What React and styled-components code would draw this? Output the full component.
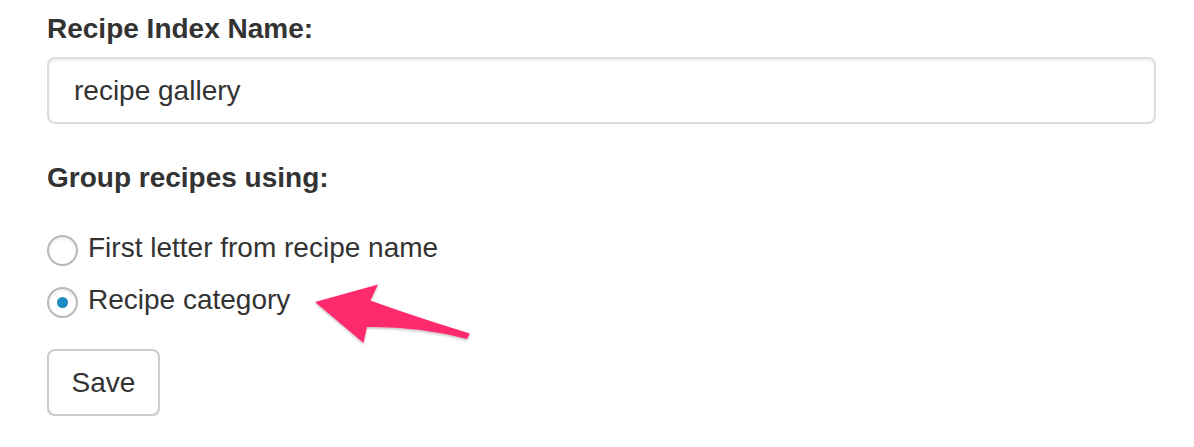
import React, { useState } from "react";
import styled, { createGlobalStyle } from "styled-components";

const GlobalStyle = createGlobalStyle`
  html, body {
    margin: 0;
    padding: 0;
    background: #ffffff;
  }
  body {
    font-family: "Liberation Sans", Arial, Helvetica, sans-serif;
    color: #333333;
  }
`;

const options = [
  { id: "letter", label: "First letter from recipe name" },
  { id: "category", label: "Recipe category" },
];

function App() {
  const [name, setName] = useState("recipe gallery");
  const [group, setGroup] = useState("category");

  return (
    <>
      <GlobalStyle />
      <Page>
        <Label htmlFor="index-name">Recipe Index Name:</Label>
        <TextInput
          id="index-name"
          value={name}
          onChange={(e) => setName(e.target.value)}
        />
        <Heading>Group recipes using:</Heading>
        <Options>
          {options.map((opt) => (
            <Option key={opt.id} onClick={() => setGroup(opt.id)}>
              <Radio checked={group === opt.id} />
              <span>{opt.label}</span>
            </Option>
          ))}
          <Arrow viewBox="0 0 180 75" aria-hidden="true">
            <defs>
              <filter id="arrowShadow" x="-10%" y="-20%" width="120%" height="150%">
                <feDropShadow dx="0" dy="1.5" stdDeviation="1.2" floodColor="#000" floodOpacity="0.25" />
              </filter>
            </defs>
            <path
              d="M15 27 L78 9.5 L70.5 25.5 Q110 40 170 58.5 L167 64 Q120 51.5 67 52 L63.5 68 Z"
              fill="#ff2c6d"
              filter="url(#arrowShadow)"
            />
          </Arrow>
        </Options>
        <SaveButton type="button">Save</SaveButton>
      </Page>
    </>
  );
}

export default App;

const Page = styled.div`
  display: flex;
  flex-direction: column;
  align-items: flex-start;
  padding: 9px 38px 0 47px;
`;

const Label = styled.label`
  display: block;
  font-size: 28px;
  font-weight: 700;
  line-height: 40px;
  margin-bottom: 8px;
`;

const TextInput = styled.input`
  box-sizing: border-box;
  width: 100%;
  height: 67px;
  padding: 0 25px;
  border: 2px solid #dddddd;
  border-radius: 8px;
  box-shadow: inset 0 2px 3px rgba(0, 0, 0, 0.06);
  font-family: "Liberation Sans", Arial, Helvetica, sans-serif;
  font-size: 28px;
  color: #333333;
  background: #ffffff;
  outline: none;
`;

const Heading = styled.div`
  font-size: 28px;
  font-weight: 700;
  line-height: 40px;
  margin-top: 34px;
`;

const Options = styled.div`
  position: relative;
  display: flex;
  flex-direction: column;
  margin-top: 24px;
`;

const Option = styled.label`
  display: flex;
  align-items: flex-start;
  font-size: 28px;
  line-height: 52px;
  cursor: pointer;
`;

const Radio = styled.span`
  box-sizing: border-box;
  flex: none;
  width: 31px;
  height: 31px;
  margin: 13px 10px 0 0;
  border: 2px solid #b4b9be;
  border-radius: 50%;
  background: #ffffff;
  box-shadow: inset 0 2px 3px rgba(0, 0, 0, 0.08);
  display: flex;
  align-items: center;
  justify-content: center;

  &::after {
    content: "";
    width: 11px;
    height: 11px;
    border-radius: 50%;
    background: #1e8cbe;
    display: ${(props) => (props.checked ? "block" : "none")};
  }
`;

const Arrow = styled.svg`
  position: absolute;
  left: 253px;
  top: 53px;
  width: 180px;
  height: 75px;
  overflow: visible;
`;

const SaveButton = styled.button`
  box-sizing: border-box;
  margin-top: 23px;
  height: 67px;
  width: 113px;
  border: 2px solid #cccccc;
  border-radius: 8px;
  background: #ffffff;
  box-shadow: 0 2px 0 rgba(0, 0, 0, 0.05);
  font-family: "Liberation Sans", Arial, Helvetica, sans-serif;
  font-size: 28px;
  color: #333333;
  cursor: pointer;
`;
